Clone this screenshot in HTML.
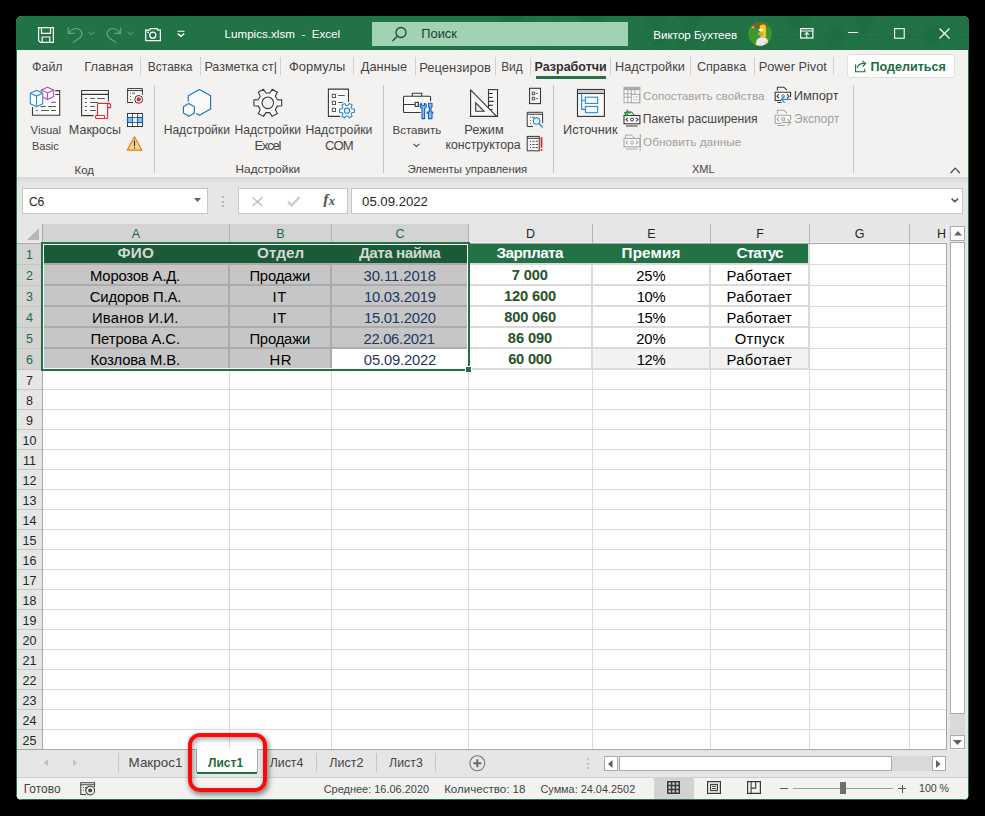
<!DOCTYPE html><html><head><meta charset="utf-8"><style>
html,body{margin:0;padding:0;}
body{width:985px;height:816px;background:#000;position:relative;overflow:hidden;font-family:"Liberation Sans", sans-serif;}
.a{position:absolute;}
.t{white-space:nowrap;}
#win{position:absolute;left:0;top:0;width:985px;height:816px;clip-path:inset(16px 16px 16px 16px round 6px);background:#f3f2f1;}
svg{overflow:visible}
</style></head><body><div id="win">
<div class="a" style="left:16px;top:16px;width:953px;height:34px;background:#217346;"></div>
<svg class="a" style="left:0;top:0" width="985" height="60" viewBox="0 0 985 60"><defs><linearGradient id="tpg" x1="0" x2="1"><stop offset="0" stop-color="#fff" stop-opacity="0"/><stop offset="0.12" stop-color="#fff" stop-opacity="1"/></linearGradient><mask id="tpm"><rect x="440" y="16" width="529" height="34" fill="url(#tpg)"/></mask><clipPath id="tpc"><rect x="16" y="16" width="953" height="34"/></clipPath></defs><g mask="url(#tpm)" clip-path="url(#tpc)" opacity="0.55"><path d="M-6.2 16L13.3 50M-6.2 16L-25.7 50" stroke="#1c6a3e" stroke-width="1"/><path d="M18.2 16L37.7 50M18.2 16L-1.3 50" stroke="#1c6a3e" stroke-width="1"/><path d="M42.6 16L62.1 50M42.6 16L23.1 50" stroke="#1c6a3e" stroke-width="1"/><path d="M67.0 16L86.5 50M67.0 16L47.5 50" stroke="#1c6a3e" stroke-width="1"/><path d="M91.4 16L110.9 50M91.4 16L71.9 50" stroke="#1c6a3e" stroke-width="1"/><path d="M115.8 16L135.3 50M115.8 16L96.3 50" stroke="#1c6a3e" stroke-width="1"/><path d="M140.2 16L159.7 50M140.2 16L120.7 50" stroke="#1c6a3e" stroke-width="1"/><path d="M164.6 16L184.1 50M164.6 16L145.1 50" stroke="#1c6a3e" stroke-width="1"/><path d="M189.0 16L208.5 50M189.0 16L169.5 50" stroke="#1c6a3e" stroke-width="1"/><path d="M213.4 16L232.9 50M213.4 16L193.9 50" stroke="#1c6a3e" stroke-width="1"/><path d="M237.8 16L257.3 50M237.8 16L218.3 50" stroke="#1c6a3e" stroke-width="1"/><path d="M262.2 16L281.7 50M262.2 16L242.7 50" stroke="#1c6a3e" stroke-width="1"/><path d="M286.6 16L306.1 50M286.6 16L267.1 50" stroke="#1c6a3e" stroke-width="1"/><path d="M311.0 16L330.5 50M311.0 16L291.5 50" stroke="#1c6a3e" stroke-width="1"/><path d="M335.4 16L354.9 50M335.4 16L315.9 50" stroke="#1c6a3e" stroke-width="1"/><path d="M359.8 16L379.3 50M359.8 16L340.3 50" stroke="#1c6a3e" stroke-width="1"/><path d="M384.2 16L403.7 50M384.2 16L364.7 50" stroke="#1c6a3e" stroke-width="1"/><path d="M408.6 16L428.1 50M408.6 16L389.1 50" stroke="#1c6a3e" stroke-width="1"/><path d="M433.0 16L452.5 50M433.0 16L413.5 50" stroke="#1c6a3e" stroke-width="1"/><path d="M457.4 16L476.9 50M457.4 16L437.9 50" stroke="#1c6a3e" stroke-width="1"/><path d="M481.8 16L501.3 50M481.8 16L462.3 50" stroke="#1c6a3e" stroke-width="1"/><path d="M506.2 16L525.7 50M506.2 16L486.7 50" stroke="#1c6a3e" stroke-width="1"/><path d="M530.6 16L550.1 50M530.6 16L511.1 50" stroke="#1c6a3e" stroke-width="1"/><path d="M555.0 16L574.5 50M555.0 16L535.5 50" stroke="#1c6a3e" stroke-width="1"/><path d="M579.4 16L598.9 50M579.4 16L559.9 50" stroke="#1c6a3e" stroke-width="1"/><path d="M603.8 16L623.3 50M603.8 16L584.3 50" stroke="#1c6a3e" stroke-width="1"/><path d="M628.2 16L647.7 50M628.2 16L608.7 50" stroke="#1c6a3e" stroke-width="1"/><path d="M652.6 16L672.1 50M652.6 16L633.1 50" stroke="#1c6a3e" stroke-width="1"/><path d="M677.0 16L696.5 50M677.0 16L657.5 50" stroke="#1c6a3e" stroke-width="1"/><path d="M701.4 16L720.9 50M701.4 16L681.9 50" stroke="#1c6a3e" stroke-width="1"/><path d="M725.8 16L745.3 50M725.8 16L706.3 50" stroke="#1c6a3e" stroke-width="1"/><path d="M750.2 16L769.7 50M750.2 16L730.7 50" stroke="#1c6a3e" stroke-width="1"/><path d="M774.6 16L794.1 50M774.6 16L755.1 50" stroke="#1c6a3e" stroke-width="1"/><path d="M799.0 16L818.5 50M799.0 16L779.5 50" stroke="#1c6a3e" stroke-width="1"/><path d="M823.4 16L842.9 50M823.4 16L803.9 50" stroke="#1c6a3e" stroke-width="1"/><path d="M847.8 16L867.3 50M847.8 16L828.3 50" stroke="#1c6a3e" stroke-width="1"/><path d="M872.2 16L891.7 50M872.2 16L852.7 50" stroke="#1c6a3e" stroke-width="1"/><path d="M896.6 16L916.1 50M896.6 16L877.1 50" stroke="#1c6a3e" stroke-width="1"/><path d="M921.0 16L940.5 50M921.0 16L901.5 50" stroke="#1c6a3e" stroke-width="1"/><path d="M945.4 16L964.9 50M945.4 16L925.9 50" stroke="#1c6a3e" stroke-width="1"/><path d="M969.8 16L989.3 50M969.8 16L950.3 50" stroke="#1c6a3e" stroke-width="1"/><path d="M994.2 16L1013.7 50M994.2 16L974.7 50" stroke="#1c6a3e" stroke-width="1"/><path d="M440 37.3H969" stroke="#1c6a3e" stroke-width="1"/><path d="M677.6 16H702.0L689.8 37.3Z" fill="#1c6a3e"/><path d="M852.0 16H876.4L864.2 37.3Z" fill="#1c6a3e"/><path d="M500.0 16H524.4L512.2 37.3Z" fill="#1c6a3e"/><path d="M580.0 16H604.4L592.2 37.3Z" fill="#1c6a3e"/><path d="M647.0 50L659.2 37.3H671.4Z" fill="#1c6a3e"/><path d="M920.0 50L932.2 37.3H944.4Z" fill="#1c6a3e"/><path d="M540.0 50L552.2 37.3H564.4Z" fill="#1c6a3e"/><circle cx="835" cy="36.7" r="8.5" fill="#1c6a3e"/><circle cx="835" cy="36.7" r="11.0" fill="none" stroke="#1c6a3e" stroke-width="1.2"/><circle cx="798.4" cy="16" r="11" fill="#1c6a3e"/><circle cx="798.4" cy="16" r="13.5" fill="none" stroke="#1c6a3e" stroke-width="1.2"/><circle cx="689" cy="40" r="9" fill="#1c6a3e"/><circle cx="689" cy="40" r="11.5" fill="none" stroke="#1c6a3e" stroke-width="1.2"/><circle cx="655" cy="16" r="10" fill="#1c6a3e"/><circle cx="655" cy="16" r="12.5" fill="none" stroke="#1c6a3e" stroke-width="1.2"/><circle cx="935" cy="34" r="9" fill="#1c6a3e"/><circle cx="935" cy="34" r="11.5" fill="none" stroke="#1c6a3e" stroke-width="1.2"/></g></svg>
<div class="a" style="left:372px;top:22px;width:256px;height:24px;background:#9fd3b4;"></div>
<svg class="a" style="left:390px;top:26px;" width="18" height="16" viewBox="0 0 18 16"><circle cx="11" cy="6.5" r="5" fill="none" stroke="#1f4f33" stroke-width="1.3"/><line x1="7.3" y1="10.2" x2="2.5" y2="15" stroke="#1f4f33" stroke-width="1.4"/></svg>
<div class="a t" style="left:421.23px;top:28.00px;font-size:12.889px;color:#1f3f2c;font-weight:400;line-height:1;">Поиск</div>
<div class="a t" style="left:224.53px;top:28.00px;font-size:11.643px;color:#ffffff;font-weight:400;line-height:1;">Lumpics.xlsm&nbsp;&nbsp;-&nbsp;&nbsp;Excel</div>
<div class="a t" style="left:653.23px;top:29.00px;font-size:11.634px;color:#ffffff;font-weight:400;line-height:1;">Виктор Бухтеев</div>
<div class="a t" style="left:32.08px;top:61.00px;font-size:12.426px;color:#454545;font-weight:400;line-height:1;">Файл</div>
<div class="a t" style="left:84.33px;top:61.00px;font-size:12.871px;color:#454545;font-weight:400;line-height:1;">Главная</div>
<div class="a t" style="left:147.80px;top:61.00px;font-size:12.000px;color:#454545;font-weight:400;line-height:1;">Вставка</div>
<div class="a t" style="left:204.46px;top:61.00px;font-size:12.496px;color:#454545;font-weight:400;line-height:1;">Разметка ст|</div>
<div class="a t" style="left:289.05px;top:61.00px;font-size:12.923px;color:#454545;font-weight:400;line-height:1;">Формулы</div>
<div class="a t" style="left:360.80px;top:61.00px;font-size:12.811px;color:#454545;font-weight:400;line-height:1;">Данные</div>
<div class="a t" style="left:419.22px;top:61.00px;font-size:13.000px;color:#454545;font-weight:400;line-height:1;">Рецензиров</div>
<div class="a t" style="left:501.21px;top:62.00px;font-size:11.884px;color:#454545;font-weight:400;line-height:1;">Вид</div>
<div class="a t" style="left:534.56px;top:61.00px;font-size:12.513px;color:#303030;font-weight:700;line-height:1;">Разработчи</div>
<div class="a t" style="left:615.04px;top:61.00px;font-size:12.748px;color:#454545;font-weight:400;line-height:1;">Надстройки</div>
<div class="a t" style="left:696.97px;top:61.00px;font-size:12.568px;color:#454545;font-weight:400;line-height:1;">Справка</div>
<div class="a t" style="left:758.74px;top:61.00px;font-size:12.762px;color:#454545;font-weight:400;line-height:1;">Power Pivot</div>
<div class="a" style="left:140px;top:57px;width:1px;height:18px;background:#d2d0ce;"></div>
<div class="a" style="left:200px;top:57px;width:1px;height:18px;background:#d2d0ce;"></div>
<div class="a" style="left:280px;top:57px;width:1px;height:18px;background:#d2d0ce;"></div>
<div class="a" style="left:353px;top:57px;width:1px;height:18px;background:#d2d0ce;"></div>
<div class="a" style="left:415px;top:57px;width:1px;height:18px;background:#d2d0ce;"></div>
<div class="a" style="left:495px;top:57px;width:1px;height:18px;background:#d2d0ce;"></div>
<div class="a" style="left:530px;top:57px;width:1px;height:18px;background:#d2d0ce;"></div>
<div class="a" style="left:610px;top:57px;width:1px;height:18px;background:#d2d0ce;"></div>
<div class="a" style="left:690px;top:57px;width:1px;height:18px;background:#d2d0ce;"></div>
<div class="a" style="left:754px;top:57px;width:1px;height:18px;background:#d2d0ce;"></div>
<div class="a" style="left:833px;top:57px;width:1px;height:18px;background:#d2d0ce;"></div>
<div class="a" style="left:536px;top:76px;width:70px;height:3px;background:#217346;"></div>
<div class="a" style="left:847px;top:54px;width:108px;height:24px;background:#ffffff;border:1px solid #e1dfdd;box-sizing:border-box;border-radius:3px;"></div>
<div class="a t" style="left:870.56px;top:61.00px;font-size:12.545px;color:#1e6b3f;font-weight:700;line-height:1;">Поделиться</div>
<div class="a" style="left:154px;top:85px;width:1px;height:88px;background:#c8c6c4;"></div>
<div class="a" style="left:383px;top:85px;width:1px;height:88px;background:#c8c6c4;"></div>
<div class="a" style="left:553px;top:85px;width:1px;height:88px;background:#c8c6c4;"></div>
<div class="a" style="left:853px;top:85px;width:1px;height:88px;background:#c8c6c4;"></div>
<div class="a t" style="left:30.60px;top:125.00px;font-size:11.283px;color:#454545;font-weight:400;line-height:1;">Visual</div>
<div class="a t" style="left:31.98px;top:141.00px;font-size:10.979px;color:#454545;font-weight:400;line-height:1;">Basic</div>
<div class="a t" style="left:68.86px;top:124.00px;font-size:12.522px;color:#454545;font-weight:400;line-height:1;">Макросы</div>
<div class="a t" style="left:74.54px;top:165.00px;font-size:11.446px;color:#454545;font-weight:400;line-height:1;">Код</div>
<div class="a t" style="left:163.69px;top:124.00px;font-size:12.075px;color:#454545;font-weight:400;line-height:1;">Надстройки</div>
<div class="a t" style="left:234.39px;top:124.00px;font-size:12.150px;color:#454545;font-weight:400;line-height:1;">Надстройки</div>
<div class="a t" style="left:254.62px;top:139.00px;font-size:13.081px;color:#454545;font-weight:400;line-height:1;letter-spacing:-1.322px;">Excel</div>
<div class="a t" style="left:305.48px;top:124.00px;font-size:12.206px;color:#454545;font-weight:400;line-height:1;">Надстройки</div>
<div class="a t" style="left:325.05px;top:139.00px;font-size:13.081px;color:#454545;font-weight:400;line-height:1;letter-spacing:-0.990px;">COM</div>
<div class="a t" style="left:235.62px;top:163.00px;font-size:11.757px;color:#454545;font-weight:400;line-height:1;">Надстройки</div>
<div class="a t" style="left:392.54px;top:125.00px;font-size:11.515px;color:#454545;font-weight:400;line-height:1;">Вставить</div>
<div class="a t" style="left:464.34px;top:124.00px;font-size:12.780px;color:#454545;font-weight:400;line-height:1;">Режим</div>
<div class="a t" style="left:445.38px;top:139.00px;font-size:12.314px;color:#454545;font-weight:400;line-height:1;">конструктора</div>
<div class="a t" style="left:407.43px;top:164.00px;font-size:11.386px;color:#454545;font-weight:400;line-height:1;">Элементы управления</div>
<div class="a t" style="left:563.04px;top:124.00px;font-size:12.762px;color:#454545;font-weight:400;line-height:1;">Источник</div>
<div class="a t" style="left:643.02px;top:90.00px;font-size:11.691px;color:#a19f9d;font-weight:400;line-height:1;">Сопоставить свойства</div>
<div class="a t" style="left:642.69px;top:113.00px;font-size:12.183px;color:#454545;font-weight:400;line-height:1;">Пакеты расширения</div>
<div class="a t" style="left:643.01px;top:137.00px;font-size:11.818px;color:#a19f9d;font-weight:400;line-height:1;">Обновить данные</div>
<div class="a t" style="left:793.63px;top:90.00px;font-size:12.882px;color:#454545;font-weight:400;line-height:1;">Импорт</div>
<div class="a t" style="left:794.00px;top:113.00px;font-size:12.054px;color:#a19f9d;font-weight:400;line-height:1;">Экспорт</div>
<div class="a t" style="left:691.93px;top:164.00px;font-size:11.000px;color:#454545;font-weight:400;line-height:1;">XML</div>
<div class="a" style="left:16px;top:177px;width:953px;height:47px;background:#e6e6e6;"></div>
<div class="a" style="left:16px;top:177px;width:953px;height:7px;background:linear-gradient(#d9d8d7,#e6e6e6);"></div>
<div class="a" style="left:22px;top:188px;width:186px;height:26px;background:#ffffff;border:1px solid #c6c6c6;box-sizing:border-box;"></div>
<div class="a t" style="left:28.90px;top:196.00px;font-size:12.083px;color:#262626;font-weight:400;line-height:1;">C6</div>
<div class="a" style="left:238px;top:188px;width:110px;height:26px;background:#ffffff;border:1px solid #c6c6c6;box-sizing:border-box;"></div>
<div class="a" style="left:351px;top:188px;width:612px;height:26px;background:#ffffff;border:1px solid #c6c6c6;box-sizing:border-box;"></div>
<div class="a t" style="left:362.07px;top:195.00px;font-size:13.178px;color:#262626;font-weight:400;line-height:1;">05.09.2022</div>
<div class="a" style="left:17px;top:224px;width:929px;height:19px;background:#e6e6e6;"></div>
<div class="a" style="left:43px;top:224px;width:425px;height:19px;background:#d3d3d3;"></div>
<div class="a" style="left:17px;top:242px;width:929px;height:1px;background:#efefef;"></div>
<div class="a" style="left:43px;top:242px;width:425px;height:1px;background:#e4e0e0;"></div>
<div class="a" style="left:17px;top:244px;width:25px;height:505px;background:#e6e6e6;"></div>
<div class="a" style="left:17px;top:244px;width:25px;height:125px;background:#d3d3d3;"></div>
<div class="a" style="left:43px;top:244px;width:903px;height:505px;background:#ffffff;"></div>
<div class="a" style="left:17px;top:264px;width:25px;height:1px;background:#c4c4c4;"></div>
<div class="a" style="left:17px;top:285px;width:25px;height:1px;background:#c4c4c4;"></div>
<div class="a" style="left:17px;top:306px;width:25px;height:1px;background:#c4c4c4;"></div>
<div class="a" style="left:17px;top:327px;width:25px;height:1px;background:#c4c4c4;"></div>
<div class="a" style="left:17px;top:348px;width:25px;height:1px;background:#c4c4c4;"></div>
<div class="a" style="left:17px;top:369px;width:25px;height:1px;background:#c4c4c4;"></div>
<div class="a" style="left:17px;top:389px;width:25px;height:1px;background:#c8c8c8;"></div>
<div class="a" style="left:17px;top:409px;width:25px;height:1px;background:#c8c8c8;"></div>
<div class="a" style="left:17px;top:429px;width:25px;height:1px;background:#c8c8c8;"></div>
<div class="a" style="left:17px;top:449px;width:25px;height:1px;background:#c8c8c8;"></div>
<div class="a" style="left:17px;top:469px;width:25px;height:1px;background:#c8c8c8;"></div>
<div class="a" style="left:17px;top:489px;width:25px;height:1px;background:#c8c8c8;"></div>
<div class="a" style="left:17px;top:509px;width:25px;height:1px;background:#c8c8c8;"></div>
<div class="a" style="left:17px;top:529px;width:25px;height:1px;background:#c8c8c8;"></div>
<div class="a" style="left:17px;top:549px;width:25px;height:1px;background:#c8c8c8;"></div>
<div class="a" style="left:17px;top:569px;width:25px;height:1px;background:#c8c8c8;"></div>
<div class="a" style="left:17px;top:589px;width:25px;height:1px;background:#c8c8c8;"></div>
<div class="a" style="left:17px;top:609px;width:25px;height:1px;background:#c8c8c8;"></div>
<div class="a" style="left:17px;top:629px;width:25px;height:1px;background:#c8c8c8;"></div>
<div class="a" style="left:17px;top:649px;width:25px;height:1px;background:#c8c8c8;"></div>
<div class="a" style="left:17px;top:669px;width:25px;height:1px;background:#c8c8c8;"></div>
<div class="a" style="left:17px;top:689px;width:25px;height:1px;background:#c8c8c8;"></div>
<div class="a" style="left:17px;top:709px;width:25px;height:1px;background:#c8c8c8;"></div>
<div class="a" style="left:17px;top:729px;width:25px;height:1px;background:#c8c8c8;"></div>
<div class="a" style="left:229px;top:224px;width:1px;height:19px;background:#b4b4b4;"></div>
<div class="a" style="left:331px;top:224px;width:1px;height:19px;background:#b4b4b4;"></div>
<div class="a" style="left:468px;top:224px;width:1px;height:19px;background:#b4b4b4;"></div>
<div class="a" style="left:592px;top:224px;width:1px;height:19px;background:#b4b4b4;"></div>
<div class="a" style="left:710px;top:224px;width:1px;height:19px;background:#b4b4b4;"></div>
<div class="a" style="left:809px;top:224px;width:1px;height:19px;background:#b4b4b4;"></div>
<div class="a" style="left:909px;top:224px;width:1px;height:19px;background:#b4b4b4;"></div>
<div class="a" style="left:17px;top:243px;width:929px;height:1px;background:#a8a8a8;"></div>
<div class="a" style="left:42px;top:224px;width:1px;height:525px;background:#a8a8a8;"></div>
<div class="a" style="left:946px;top:243px;width:1px;height:507px;background:#a8a8a8;"></div>
<div class="a" style="left:17px;top:749px;width:930px;height:1px;background:#a8a8a8;"></div>
<div class="a" style="left:43px;top:389px;width:903px;height:1px;background:#dadada;"></div>
<div class="a" style="left:43px;top:409px;width:903px;height:1px;background:#dadada;"></div>
<div class="a" style="left:43px;top:429px;width:903px;height:1px;background:#dadada;"></div>
<div class="a" style="left:43px;top:449px;width:903px;height:1px;background:#dadada;"></div>
<div class="a" style="left:43px;top:469px;width:903px;height:1px;background:#dadada;"></div>
<div class="a" style="left:43px;top:489px;width:903px;height:1px;background:#dadada;"></div>
<div class="a" style="left:43px;top:509px;width:903px;height:1px;background:#dadada;"></div>
<div class="a" style="left:43px;top:529px;width:903px;height:1px;background:#dadada;"></div>
<div class="a" style="left:43px;top:549px;width:903px;height:1px;background:#dadada;"></div>
<div class="a" style="left:43px;top:569px;width:903px;height:1px;background:#dadada;"></div>
<div class="a" style="left:43px;top:589px;width:903px;height:1px;background:#dadada;"></div>
<div class="a" style="left:43px;top:609px;width:903px;height:1px;background:#dadada;"></div>
<div class="a" style="left:43px;top:629px;width:903px;height:1px;background:#dadada;"></div>
<div class="a" style="left:43px;top:649px;width:903px;height:1px;background:#dadada;"></div>
<div class="a" style="left:43px;top:669px;width:903px;height:1px;background:#dadada;"></div>
<div class="a" style="left:43px;top:689px;width:903px;height:1px;background:#dadada;"></div>
<div class="a" style="left:43px;top:709px;width:903px;height:1px;background:#dadada;"></div>
<div class="a" style="left:43px;top:729px;width:903px;height:1px;background:#dadada;"></div>
<div class="a" style="left:229px;top:370px;width:1px;height:379px;background:#dadada;"></div>
<div class="a" style="left:331px;top:370px;width:1px;height:379px;background:#dadada;"></div>
<div class="a" style="left:468px;top:370px;width:1px;height:379px;background:#dadada;"></div>
<div class="a" style="left:592px;top:370px;width:1px;height:379px;background:#dadada;"></div>
<div class="a" style="left:710px;top:370px;width:1px;height:379px;background:#dadada;"></div>
<div class="a" style="left:809px;top:370px;width:1px;height:379px;background:#dadada;"></div>
<div class="a" style="left:909px;top:370px;width:1px;height:379px;background:#dadada;"></div>
<div class="a" style="left:810px;top:264px;width:136px;height:1px;background:#dadada;"></div>
<div class="a" style="left:810px;top:285px;width:136px;height:1px;background:#dadada;"></div>
<div class="a" style="left:810px;top:306px;width:136px;height:1px;background:#dadada;"></div>
<div class="a" style="left:810px;top:327px;width:136px;height:1px;background:#dadada;"></div>
<div class="a" style="left:810px;top:348px;width:136px;height:1px;background:#dadada;"></div>
<div class="a" style="left:810px;top:369px;width:136px;height:1px;background:#dadada;"></div>
<div class="a" style="left:909px;top:244px;width:1px;height:126px;background:#dadada;"></div>
<div class="a" style="left:470px;top:263px;width:340px;height:2px;background:#dadada;"></div>
<div class="a" style="left:470px;top:284px;width:340px;height:2px;background:#dadada;"></div>
<div class="a" style="left:470px;top:305px;width:340px;height:2px;background:#dadada;"></div>
<div class="a" style="left:470px;top:326px;width:340px;height:2px;background:#dadada;"></div>
<div class="a" style="left:470px;top:347px;width:340px;height:2px;background:#dadada;"></div>
<div class="a" style="left:470px;top:368px;width:340px;height:2px;background:#dadada;"></div>
<div class="a" style="left:591px;top:244px;width:2px;height:125px;background:#dadada;"></div>
<div class="a" style="left:709px;top:244px;width:2px;height:125px;background:#dadada;"></div>
<div class="a" style="left:808px;top:244px;width:2px;height:125px;background:#dadada;"></div>
<div class="a" style="left:470px;top:244px;width:338px;height:19px;background:#217346;"></div>
<svg class="a" style="left:27px;top:228px;" width="12" height="12" viewBox="0 0 12 12"><polygon points="12,0 12,12 0,12" fill="#b8b8b8"/></svg>
<div class="a t" style="left:-64.00px;width:400px;text-align:center;top:228.00px;font-size:12.500px;color:#1e6b3f;font-weight:400;line-height:1;">A</div>
<div class="a t" style="left:80.50px;width:400px;text-align:center;top:228.00px;font-size:12.500px;color:#1e6b3f;font-weight:400;line-height:1;">B</div>
<div class="a t" style="left:200.00px;width:400px;text-align:center;top:228.00px;font-size:12.500px;color:#1e6b3f;font-weight:400;line-height:1;">C</div>
<div class="a t" style="left:330.50px;width:400px;text-align:center;top:228.00px;font-size:12.500px;color:#262626;font-weight:400;line-height:1;">D</div>
<div class="a t" style="left:451.50px;width:400px;text-align:center;top:228.00px;font-size:12.500px;color:#262626;font-weight:400;line-height:1;">E</div>
<div class="a t" style="left:560.00px;width:400px;text-align:center;top:228.00px;font-size:12.500px;color:#262626;font-weight:400;line-height:1;">F</div>
<div class="a t" style="left:659.50px;width:400px;text-align:center;top:228.00px;font-size:12.500px;color:#262626;font-weight:400;line-height:1;">G</div>
<div class="a t" style="left:741.50px;width:400px;text-align:center;top:228.00px;font-size:12.500px;color:#262626;font-weight:400;line-height:1;">H</div>
<div class="a t" style="left:-170.50px;width:400px;text-align:center;top:249.00px;font-size:12.500px;color:#1e6b3f;font-weight:400;line-height:1;">1</div>
<div class="a t" style="left:-170.50px;width:400px;text-align:center;top:270.00px;font-size:12.500px;color:#1e6b3f;font-weight:400;line-height:1;">2</div>
<div class="a t" style="left:-170.50px;width:400px;text-align:center;top:291.00px;font-size:12.500px;color:#1e6b3f;font-weight:400;line-height:1;">3</div>
<div class="a t" style="left:-170.50px;width:400px;text-align:center;top:312.00px;font-size:12.500px;color:#1e6b3f;font-weight:400;line-height:1;">4</div>
<div class="a t" style="left:-170.50px;width:400px;text-align:center;top:333.00px;font-size:12.500px;color:#1e6b3f;font-weight:400;line-height:1;">5</div>
<div class="a t" style="left:-170.50px;width:400px;text-align:center;top:354.00px;font-size:12.500px;color:#1e6b3f;font-weight:400;line-height:1;">6</div>
<div class="a t" style="left:-170.50px;width:400px;text-align:center;top:375.00px;font-size:12.500px;color:#262626;font-weight:400;line-height:1;">7</div>
<div class="a t" style="left:-170.50px;width:400px;text-align:center;top:395.00px;font-size:12.500px;color:#262626;font-weight:400;line-height:1;">8</div>
<div class="a t" style="left:-170.50px;width:400px;text-align:center;top:415.00px;font-size:12.500px;color:#262626;font-weight:400;line-height:1;">9</div>
<div class="a t" style="left:-170.50px;width:400px;text-align:center;top:435.00px;font-size:12.500px;color:#262626;font-weight:400;line-height:1;">10</div>
<div class="a t" style="left:-170.50px;width:400px;text-align:center;top:455.00px;font-size:12.500px;color:#262626;font-weight:400;line-height:1;">11</div>
<div class="a t" style="left:-170.50px;width:400px;text-align:center;top:475.00px;font-size:12.500px;color:#262626;font-weight:400;line-height:1;">12</div>
<div class="a t" style="left:-170.50px;width:400px;text-align:center;top:495.00px;font-size:12.500px;color:#262626;font-weight:400;line-height:1;">13</div>
<div class="a t" style="left:-170.50px;width:400px;text-align:center;top:515.00px;font-size:12.500px;color:#262626;font-weight:400;line-height:1;">14</div>
<div class="a t" style="left:-170.50px;width:400px;text-align:center;top:535.00px;font-size:12.500px;color:#262626;font-weight:400;line-height:1;">15</div>
<div class="a t" style="left:-170.50px;width:400px;text-align:center;top:555.00px;font-size:12.500px;color:#262626;font-weight:400;line-height:1;">16</div>
<div class="a t" style="left:-170.50px;width:400px;text-align:center;top:575.00px;font-size:12.500px;color:#262626;font-weight:400;line-height:1;">17</div>
<div class="a t" style="left:-170.50px;width:400px;text-align:center;top:595.00px;font-size:12.500px;color:#262626;font-weight:400;line-height:1;">18</div>
<div class="a t" style="left:-170.50px;width:400px;text-align:center;top:615.00px;font-size:12.500px;color:#262626;font-weight:400;line-height:1;">19</div>
<div class="a t" style="left:-170.50px;width:400px;text-align:center;top:635.00px;font-size:12.500px;color:#262626;font-weight:400;line-height:1;">20</div>
<div class="a t" style="left:-170.50px;width:400px;text-align:center;top:655.00px;font-size:12.500px;color:#262626;font-weight:400;line-height:1;">21</div>
<div class="a t" style="left:-170.50px;width:400px;text-align:center;top:675.00px;font-size:12.500px;color:#262626;font-weight:400;line-height:1;">22</div>
<div class="a t" style="left:-170.50px;width:400px;text-align:center;top:695.00px;font-size:12.500px;color:#262626;font-weight:400;line-height:1;">23</div>
<div class="a t" style="left:-170.50px;width:400px;text-align:center;top:715.00px;font-size:12.500px;color:#262626;font-weight:400;line-height:1;">24</div>
<div class="a t" style="left:-170.50px;width:400px;text-align:center;top:735.00px;font-size:12.500px;color:#262626;font-weight:400;line-height:1;">25</div>
<div class="a" style="left:44px;top:245px;width:423px;height:123px;background:#c6c6c6;"></div>
<div class="a" style="left:44px;top:245px;width:423px;height:18px;background:#1b5a37;"></div>
<div class="a" style="left:44px;top:263px;width:423px;height:2px;background:#ababab;"></div>
<div class="a" style="left:44px;top:284px;width:423px;height:2px;background:#ababab;"></div>
<div class="a" style="left:44px;top:305px;width:423px;height:2px;background:#ababab;"></div>
<div class="a" style="left:44px;top:326px;width:423px;height:2px;background:#ababab;"></div>
<div class="a" style="left:44px;top:347px;width:423px;height:2px;background:#ababab;"></div>
<div class="a" style="left:228px;top:265px;width:2px;height:103px;background:#ababab;"></div>
<div class="a" style="left:330px;top:265px;width:2px;height:103px;background:#ababab;"></div>
<div class="a" style="left:332px;top:349px;width:135px;height:19px;background:#ffffff;"></div>
<div class="a" style="left:43px;top:244px;width:425px;height:1px;background:#fff;"></div>
<div class="a" style="left:43px;top:368px;width:425px;height:1px;background:#fff;"></div>
<div class="a" style="left:43px;top:244px;width:1px;height:125px;background:#fff;"></div>
<div class="a" style="left:467px;top:244px;width:1px;height:125px;background:#fff;"></div>
<div class="a" style="left:41px;top:242px;width:429px;height:2px;background:#217346;"></div>
<div class="a" style="left:41px;top:369px;width:424px;height:2px;background:#217346;"></div>
<div class="a" style="left:41px;top:242px;width:2px;height:129px;background:#217346;"></div>
<div class="a" style="left:468px;top:242px;width:2px;height:124px;background:#217346;"></div>
<div class="a" style="left:465px;top:366px;width:7px;height:7px;background:#ffffff;"></div>
<div class="a" style="left:466px;top:367px;width:5px;height:5px;background:#217346;"></div>
<div class="a" style="left:593px;top:349px;width:116px;height:19px;background:#f2f2f2;"></div>
<div class="a" style="left:711px;top:349px;width:97px;height:19px;background:#f2f2f2;"></div>
<div class="a t" style="left:117.42px;top:245.00px;font-size:15.262px;color:#d2d8d4;font-weight:700;line-height:1;letter-spacing:0.249px;">ФИО</div>
<div class="a t" style="left:257.04px;top:245.00px;font-size:15.262px;color:#d2d8d4;font-weight:700;line-height:1;letter-spacing:0.024px;">Отдел</div>
<div class="a t" style="left:359.00px;top:245.00px;font-size:15.262px;color:#d2d8d4;font-weight:700;line-height:1;letter-spacing:-0.503px;">Дата найма</div>
<div class="a t" style="left:496.62px;top:245.00px;font-size:15.262px;color:#ffffff;font-weight:700;line-height:1;letter-spacing:-0.541px;">Зарплата</div>
<div class="a t" style="left:621.56px;top:245.00px;font-size:15.262px;color:#ffffff;font-weight:700;line-height:1;letter-spacing:0.143px;">Премия</div>
<div class="a t" style="left:736.54px;top:245.00px;font-size:15.262px;color:#ffffff;font-weight:700;line-height:1;letter-spacing:-0.873px;">Статус</div>
<div class="a t" style="left:89.99px;top:269.00px;font-size:14.826px;color:#000000;font-weight:400;line-height:1;letter-spacing:-0.172px;">Морозов А.Д.</div>
<div class="a t" style="left:249.39px;top:269.00px;font-size:14.826px;color:#000000;font-weight:400;line-height:1;letter-spacing:-0.174px;">Продажи</div>
<div class="a t" style="left:363.46px;top:269.00px;font-size:14.826px;color:#1f3864;font-weight:400;line-height:1;letter-spacing:-0.056px;">30.11.2018</div>
<div class="a t" style="left:511.67px;top:268.00px;font-size:14.680px;color:#24532c;font-weight:700;line-height:1;letter-spacing:-0.125px;">7 000</div>
<div class="a t" style="left:636.26px;top:269.00px;font-size:14.826px;color:#000000;font-weight:400;line-height:1;letter-spacing:-0.120px;">25%</div>
<div class="a t" style="left:726.59px;top:269.00px;font-size:14.826px;color:#000000;font-weight:400;line-height:1;letter-spacing:0.262px;">Работает</div>
<div class="a t" style="left:89.76px;top:290.00px;font-size:14.826px;color:#000000;font-weight:400;line-height:1;letter-spacing:-0.143px;">Сидоров П.А.</div>
<div class="a t" style="left:272.52px;top:290.00px;font-size:14.826px;color:#000000;font-weight:400;line-height:1;letter-spacing:0.510px;">IT</div>
<div class="a t" style="left:363.99px;top:290.00px;font-size:14.826px;color:#1f3864;font-weight:400;line-height:1;letter-spacing:-0.238px;">10.03.2019</div>
<div class="a t" style="left:503.97px;top:289.00px;font-size:14.680px;color:#24532c;font-weight:700;line-height:1;letter-spacing:-0.141px;">120 600</div>
<div class="a t" style="left:636.69px;top:290.00px;font-size:14.826px;color:#000000;font-weight:400;line-height:1;letter-spacing:-0.334px;">10%</div>
<div class="a t" style="left:726.59px;top:290.00px;font-size:14.826px;color:#000000;font-weight:400;line-height:1;letter-spacing:0.262px;">Работает</div>
<div class="a t" style="left:91.99px;top:311.00px;font-size:14.826px;color:#000000;font-weight:400;line-height:1;letter-spacing:0.192px;">Иванов И.И.</div>
<div class="a t" style="left:272.52px;top:311.00px;font-size:14.826px;color:#000000;font-weight:400;line-height:1;letter-spacing:0.510px;">IT</div>
<div class="a t" style="left:363.99px;top:311.00px;font-size:14.826px;color:#1f3864;font-weight:400;line-height:1;letter-spacing:-0.238px;">15.01.2020</div>
<div class="a t" style="left:504.33px;top:310.00px;font-size:14.680px;color:#24532c;font-weight:700;line-height:1;letter-spacing:-0.202px;">800 060</div>
<div class="a t" style="left:636.69px;top:311.00px;font-size:14.826px;color:#000000;font-weight:400;line-height:1;letter-spacing:-0.334px;">15%</div>
<div class="a t" style="left:726.59px;top:311.00px;font-size:14.826px;color:#000000;font-weight:400;line-height:1;letter-spacing:0.262px;">Работает</div>
<div class="a t" style="left:90.49px;top:332.00px;font-size:14.826px;color:#000000;font-weight:400;line-height:1;letter-spacing:-0.083px;">Петрова А.С.</div>
<div class="a t" style="left:249.39px;top:332.00px;font-size:14.826px;color:#000000;font-weight:400;line-height:1;letter-spacing:-0.174px;">Продажи</div>
<div class="a t" style="left:363.46px;top:332.00px;font-size:14.826px;color:#1f3864;font-weight:400;line-height:1;letter-spacing:-0.291px;">22.06.2021</div>
<div class="a t" style="left:507.83px;top:331.00px;font-size:14.680px;color:#24532c;font-weight:700;line-height:1;letter-spacing:-0.088px;">86 090</div>
<div class="a t" style="left:636.26px;top:332.00px;font-size:14.826px;color:#000000;font-weight:400;line-height:1;letter-spacing:-0.120px;">20%</div>
<div class="a t" style="left:734.66px;top:332.00px;font-size:14.826px;color:#000000;font-weight:400;line-height:1;letter-spacing:0.400px;">Отпуск</div>
<div class="a t" style="left:90.49px;top:353.00px;font-size:14.826px;color:#000000;font-weight:400;line-height:1;letter-spacing:-0.117px;">Козлова М.В.</div>
<div class="a t" style="left:269.49px;top:353.00px;font-size:14.826px;color:#000000;font-weight:400;line-height:1;letter-spacing:0.456px;">HR</div>
<div class="a t" style="left:363.83px;top:353.00px;font-size:14.826px;color:#1f3864;font-weight:400;line-height:1;letter-spacing:-0.180px;">05.09.2022</div>
<div class="a t" style="left:508.13px;top:352.00px;font-size:14.680px;color:#24532c;font-weight:700;line-height:1;letter-spacing:-0.208px;">60 000</div>
<div class="a t" style="left:636.69px;top:353.00px;font-size:14.826px;color:#000000;font-weight:400;line-height:1;letter-spacing:-0.334px;">12%</div>
<div class="a t" style="left:726.59px;top:353.00px;font-size:14.826px;color:#000000;font-weight:400;line-height:1;letter-spacing:0.262px;">Работает</div>
<div class="a" style="left:947px;top:224px;width:21px;height:525px;background:#e6e6e6;"></div>
<div class="a" style="left:950px;top:226px;width:15px;height:15px;background:#ffffff;border:1px solid #ababab;box-sizing:border-box;"></div>
<div class="a" style="left:950px;top:714px;width:15px;height:21px;background:#d9d9d9;"></div>
<div class="a" style="left:950px;top:242px;width:15px;height:472px;background:#ffffff;border:1px solid #ababab;box-sizing:border-box;"></div>
<div class="a" style="left:950px;top:735px;width:15px;height:14px;background:#ffffff;border:1px solid #ababab;box-sizing:border-box;"></div>
<div class="a" style="left:17px;top:750px;width:951px;height:27px;background:#e6e6e6;"></div>
<div class="a" style="left:17px;top:777px;width:951px;height:1px;background:#cdcdcd;"></div>
<div class="a" style="left:118px;top:753px;width:1px;height:19px;background:#c6c6c6;"></div>
<div class="a" style="left:196px;top:749px;width:62px;height:25px;background:#ffffff;"></div>
<div class="a" style="left:196px;top:749px;width:1px;height:24px;background:#a8a8a8;"></div>
<div class="a" style="left:257px;top:749px;width:1px;height:24px;background:#a8a8a8;"></div>
<div class="a" style="left:197px;top:772px;width:60px;height:2px;background:#217346;"></div>
<div class="a t" style="left:128.59px;top:756.00px;font-size:13.436px;color:#444444;font-weight:400;line-height:1;">Макрос1</div>
<div class="a t" style="left:208.00px;top:757.00px;font-size:12.034px;color:#1e6b3f;font-weight:700;line-height:1;">Лист1</div>
<div class="a t" style="left:269.70px;top:757.00px;font-size:12.333px;color:#444444;font-weight:400;line-height:1;">Лист4</div>
<div class="a" style="left:316px;top:753px;width:1px;height:19px;background:#c6c6c6;"></div>
<div class="a t" style="left:329.30px;top:757.00px;font-size:12.523px;color:#444444;font-weight:400;line-height:1;">Лист2</div>
<div class="a" style="left:376px;top:753px;width:1px;height:19px;background:#c6c6c6;"></div>
<div class="a t" style="left:389.00px;top:757.00px;font-size:12.407px;color:#444444;font-weight:400;line-height:1;">Лист3</div>
<div class="a" style="left:435px;top:753px;width:1px;height:19px;background:#c6c6c6;"></div>
<div class="a" style="left:604px;top:756px;width:343px;height:15px;background:#e6e6e6;"></div>
<div class="a" style="left:604px;top:756px;width:14px;height:15px;background:#ffffff;border:1px solid #ababab;box-sizing:border-box;"></div>
<div class="a" style="left:892px;top:756px;width:40px;height:15px;background:#d9d9d9;"></div>
<div class="a" style="left:619px;top:756px;width:273px;height:15px;background:#ffffff;border:1px solid #ababab;box-sizing:border-box;"></div>
<div class="a" style="left:932px;top:756px;width:14px;height:15px;background:#ffffff;border:1px solid #ababab;box-sizing:border-box;"></div>
<div class="a" style="left:17px;top:778px;width:951px;height:22px;background:#f3f2f1;"></div>
<div class="a t" style="left:23.71px;top:784.00px;font-size:11.933px;color:#444444;font-weight:400;line-height:1;">Готово</div>
<div class="a t" style="left:323.65px;top:784.00px;font-size:10.982px;color:#444444;font-weight:400;line-height:1;">Среднее: 16.06.2020</div>
<div class="a t" style="left:444.13px;top:784.00px;font-size:11.552px;color:#444444;font-weight:400;line-height:1;">Количество: 18</div>
<div class="a t" style="left:540.45px;top:784.00px;font-size:10.907px;color:#444444;font-weight:400;line-height:1;">Сумма: 24.04.2502</div>
<div class="a" style="left:654px;top:777px;width:40px;height:22px;background:#d2d2d2;"></div>
<div class="a t" style="left:919.00px;top:783.00px;font-size:10.606px;color:#444444;font-weight:400;line-height:1;">100 %</div>
<div class="a" style="left:793px;top:788px;width:100px;height:1px;background:#a0a0a0;"></div>
<div class="a" style="left:840px;top:782px;width:6px;height:12px;background:#6e6e6e;"></div>
<div class="a" style="left:16px;top:16px;width:1px;height:784px;background:#217346;"></div>
<div class="a" style="left:968px;top:16px;width:1px;height:784px;background:#217346;"></div>
<div class="a" style="left:16px;top:799px;width:953px;height:1px;background:#217346;"></div>
<div class="a" style="left:187.5px;top:733px;width:79px;height:59px;border:4.7px solid #fb0a0a;border-radius:12px;box-sizing:border-box;box-shadow:1.5px 2.5px 5px rgba(0,0,0,0.45), inset 1.5px 2.5px 5px rgba(0,0,0,0.35);"></div>
<svg class="a" style="left:38px;top:27px;" width="16" height="16" viewBox="0 0 16 16"><path d="M0.6 0.6H15.4V15.4H2.4L0.6 13.6Z" fill="none" stroke="#fff" stroke-width="1.2"/><path d="M3.5 0.6V6.4H12.5V0.6" fill="none" stroke="#fff" stroke-width="1.2"/><path d="M4.2 15.4V10H11.8V15.4" fill="none" stroke="#fff" stroke-width="1.2"/></svg>
<svg class="a" style="left:67px;top:27px;" width="18" height="16" viewBox="0 0 18 16"><path d="M1.2 0.3V6.4H7.7" fill="none" stroke="#6fa583" stroke-width="1.1"/><path d="M1.5 6.2C4.5 1.5 10 0 13.3 3.2C15.6 5.6 15.2 8.6 13 10.8L5.8 15.6" fill="none" stroke="#6fa583" stroke-width="1.1"/></svg>
<svg class="a" style="left:88px;top:31px;" width="8" height="5" viewBox="0 0 8 5"><path d="M0.5 0.8L3.5 3.8L6.5 0.8" fill="none" stroke="#6fa583" stroke-width="1"/></svg>
<svg class="a" style="left:106px;top:27px;" width="18" height="16" viewBox="0 0 18 16"><path d="M14.8 0.3V6.4H8.3" fill="none" stroke="#6fa583" stroke-width="1.1"/><path d="M14.5 6.2C11.5 1.5 6 0 2.7 3.2C0.4 5.6 0.8 8.6 3 10.8L10.2 15.6" fill="none" stroke="#6fa583" stroke-width="1.1"/></svg>
<svg class="a" style="left:127px;top:31px;" width="8" height="5" viewBox="0 0 8 5"><path d="M0.5 0.8L3.5 3.8L6.5 0.8" fill="none" stroke="#6fa583" stroke-width="1"/></svg>
<svg class="a" style="left:145px;top:28px;" width="17" height="14" viewBox="0 0 17 14"><path d="M0.7 2.2H4.5L5.2 0.7H12L12.8 2.2H15.4V12.6H0.7Z" fill="none" stroke="#fff" stroke-width="1.2"/><circle cx="7.8" cy="7.2" r="3" fill="none" stroke="#fff" stroke-width="1.3"/><rect x="2.4" y="3.6" width="1.6" height="1.6" fill="#fff"/></svg>
<svg class="a" style="left:177px;top:30px;" width="9" height="8" viewBox="0 0 9 8"><path d="M0.5 1.2H7.5" stroke="#fff" stroke-width="1.1"/><path d="M0.8 3.6L4 6.4L7.2 3.6" fill="none" stroke="#fff" stroke-width="1.4"/></svg>
<svg class="a" style="left:748px;top:22px;" width="24" height="24" viewBox="0 0 24 24"><defs><clipPath id="av"><circle cx="12" cy="12" r="11.8"/></clipPath></defs><g clip-path="url(#av)"><rect width="24" height="24" fill="#3f982c"/><path d="M2 6.5Q6 0.5 13 0.8Q19 1 21 6L17 5.5L11 6.5Z" fill="#8a5a2c"/><path d="M3 6Q4 4 6 4L6.5 6.5Z" fill="#d0b090"/><path d="M11.7 4Q12.5 2.4 15 2.5Q17.9 2.8 17.9 5V15.2H12.5V9Z" fill="#f4cf1e"/><ellipse cx="12.9" cy="8" rx="2.3" ry="1.4" fill="#f4f4f4"/><path d="M10 10.5Q12 9.8 15.2 10.5V14Q12.5 14.5 10.3 13Z" fill="#c9a24e"/><path d="M7.6 24L8.6 18Q10.5 15.4 14 15.2Q19.5 15.4 20 19L20.5 24Z" fill="#e9e9ee"/><path d="M16.5 20.5L20 19.5L20.5 22.5L17 23Z" fill="#f4cf1e"/><path d="M7.5 21.5L9 21.5L8.5 23.5L7 23.5Z" fill="#f4cf1e"/></g></svg>
<svg class="a" style="left:800px;top:28px;" width="14" height="11" viewBox="0 0 14 11"><rect x="0.6" y="0.6" width="12.3" height="9.4" fill="none" stroke="#fff" stroke-width="1.2"/><path d="M0.6 3H12.9" stroke="#fff" stroke-width="1.1"/><path d="M6.75 10V4.6M4.6 6.6L6.75 4.5L8.9 6.6" fill="none" stroke="#fff" stroke-width="1.1"/></svg>
<div class="a" style="left:848px;top:32px;width:10px;height:1px;background:#fff;"></div>
<svg class="a" style="left:894px;top:28px;" width="11" height="11" viewBox="0 0 11 11"><rect x="0.6" y="0.6" width="9.6" height="9.6" fill="none" stroke="#fff" stroke-width="1.1"/></svg>
<svg class="a" style="left:939px;top:28px;" width="11" height="11" viewBox="0 0 11 11"><path d="M0.5 0.5L10.5 10.5M10.5 0.5L0.5 10.5" stroke="#fff" stroke-width="1.1"/></svg>
<svg class="a" style="left:855px;top:60px;" width="14" height="13" viewBox="0 0 14 13"><path d="M0.6 4.4V11.8H9.8V8.8" fill="none" stroke="#1e6b3f" stroke-width="1.1"/><path d="M2.2 8C3 5 5.5 3.3 9.5 3.4" fill="none" stroke="#1e6b3f" stroke-width="1.1"/><path d="M7.5 0.8L10.6 3.5L7.8 6.5" fill="none" stroke="#1e6b3f" stroke-width="1.1"/></svg>
<svg class="a" style="left:26px;top:84px;" width="40" height="36" viewBox="0 0 40 36"><path d="M6.5 23V31.3H33.7V6.6H29.3" fill="#fafafa" stroke="#383838" stroke-width="1.1"/><path d="M29.3 10.5H33.2" stroke="#383838" stroke-width="1.1"/><path d="M25.2 18.3H29.9M14.6 22.5H19.8M22.2 22.5H29.9M10 26.5H11.8M15 26.5H22.9M25 26.5H29.9" stroke="#555" stroke-width="1"/><polygon points="21.5,3.2 27.7,6.1 27.7,12.5 21.5,15.4 15.3,12.5 15.3,6.1" fill="#fafafa" stroke="#b04cc0" stroke-width="1.1" stroke-linejoin="round"/><path d="M15.3 6.1L21.5 9.0L27.7 6.1M21.5 9.0V15.4" fill="none" stroke="#b04cc0" stroke-width="1.1"/><polygon points="10.5,6.3 16.7,9.2 16.7,19.8 10.5,22.7 4.3,19.8 4.3,9.2" fill="#fafafa" stroke="#2b8fd9" stroke-width="1.1" stroke-linejoin="round"/><path d="M4.3 9.2L10.5 12.1L16.7 9.2M10.5 12.1V22.7" fill="none" stroke="#2b8fd9" stroke-width="1.1"/></svg>
<svg class="a" style="left:76px;top:84px;" width="40" height="36" viewBox="0 0 40 36"><path d="M17.6 31.6H5.6V6.5H32.4V17.4" fill="#fafafa" stroke="#383838" stroke-width="1.1"/><path d="M5.6 10.4H32.4" stroke="#383838" stroke-width="1.1"/><path d="M9.1 14.5H11M14.1 14.5H18.9M21.1 14.5H28.9M9.1 18.5H11M14.1 18.5H22M9.1 22.5H11M14.1 22.5H18.9M9.1 26.5H11M14.1 26.5H19.8" stroke="#555" stroke-width="1"/><path d="M21.5 31.5V20.5Q21.5 19.4 22.6 19.4H32.5Q34.6 19.4 34.6 21.6V23.6H31.6V33.4Q31.6 34.5 30.5 34.5H28.6" fill="#fafafa" stroke="#e8262d" stroke-width="1.1"/><path d="M31.6 19.6V23.6" stroke="#e8262d" stroke-width="1.1"/><rect x="19.6" y="31.5" width="9" height="3" rx="0.8" fill="#fafafa" stroke="#e8262d" stroke-width="1.1"/></svg>
<svg class="a" style="left:122px;top:84px;" width="26" height="22" viewBox="0 0 26 22"><path d="M11 18.5H5.6V4.6H20.4V11" fill="#fafafa" stroke="#383838" stroke-width="1"/><path d="M5.6 6.6H20.4" stroke="#383838" stroke-width="1"/><path d="M8 9.2H9M10.2 9.2H13M8 12.4H9M8 15.5H9" stroke="#555" stroke-width="1"/><circle cx="16.7" cy="15.4" r="3.9" fill="#fafafa" stroke="#383838" stroke-width="1"/><circle cx="16.7" cy="15.4" r="2.1" fill="#e8262d"/></svg>
<svg class="a" style="left:122px;top:113px;" width="26" height="15" viewBox="0 0 26 15"><rect x="5.5" y="0.5" width="15" height="13" fill="#fafafa" stroke="#383838" stroke-width="1"/><path d="M10.5 0.5V13.5M15.5 0.5V13.5M5.5 4.5H20.5M5.5 9.5H20.5" stroke="#6a6a6a" stroke-width="1"/><rect x="5.5" y="0.5" width="15" height="13" fill="none" stroke="#383838" stroke-width="1"/><rect x="5.5" y="4.5" width="5" height="5" fill="#8cc4ef" stroke="#0f64c0" stroke-width="1.2"/><rect x="15.5" y="4.5" width="5" height="5" fill="#8cc4ef" stroke="#0f64c0" stroke-width="1.2"/></svg>
<svg class="a" style="left:122px;top:136px;" width="26" height="16" viewBox="0 0 26 16"><path d="M12.5 0.8L19.8 14.2H5.2Z" fill="#f7d48a" stroke="#e0801a" stroke-width="1.2" stroke-linejoin="round"/><path d="M12.5 4.5V10" stroke="#333" stroke-width="1.2"/><rect x="11.9" y="11.2" width="1.2" height="1.3" fill="#333"/></svg>
<svg class="a" style="left:176px;top:84px;" width="40" height="36" viewBox="0 0 40 36"><path d="M12.3 17.6V11.7L23.4 5.5L34.6 11.7V25.1L23.4 31.3L20.3 29.4" fill="#fafafa" stroke="#1f73c8" stroke-width="1.15" stroke-linejoin="round"/><polygon points="12.8,19.4 18.4,22.7 18.4,29.1 12.8,32.2 7.4,29.1 7.4,22.7" fill="#fafafa" stroke="#1f73c8" stroke-width="1.15" stroke-linejoin="round"/></svg>
<svg class="a" style="left:248px;top:84px;" width="40" height="36" viewBox="0 0 40 36"><polygon points="29.26,15.59 33.69,15.90 33.69,21.80 29.26,22.11 27.35,25.41 29.30,29.40 24.19,32.36 21.71,28.67 17.89,28.67 15.41,32.36 10.30,29.40 12.25,25.41 10.34,22.11 5.91,21.80 5.91,15.90 10.34,15.59 12.25,12.29 10.30,8.30 15.41,5.34 17.89,9.03 21.71,9.03 24.19,5.34 29.30,8.30 27.35,12.29" fill="#fafafa" stroke="#383838" stroke-width="1.1" stroke-linejoin="round"/><circle cx="19.8" cy="18.85" r="5.8" fill="#f3f2f1" stroke="#383838" stroke-width="1.1"/></svg>
<svg class="a" style="left:322px;top:84px;" width="40" height="36" viewBox="0 0 40 36"><path d="M18.1 32.4H6.4V5.1H26.5V18.1" fill="#fafafa" stroke="#383838" stroke-width="1.1"/><rect x="10.3" y="10.3" width="3.2" height="3.2" fill="none" stroke="#555" stroke-width="1"/><rect x="10.3" y="17.3" width="3.2" height="3.2" fill="none" stroke="#555" stroke-width="1"/><rect x="10.3" y="24.3" width="3.2" height="3.2" fill="none" stroke="#555" stroke-width="1"/><path d="M16.2 11.5H22.8M16.2 18.5H21" stroke="#555" stroke-width="1"/><polygon points="29.95,24.80 32.43,25.12 32.43,28.28 29.95,28.60 29.12,30.04 30.09,32.35 27.35,33.93 25.83,31.93 24.17,31.93 22.65,33.93 19.91,32.35 20.88,30.04 20.05,28.60 17.57,28.28 17.57,25.12 20.05,24.80 20.88,23.36 19.91,21.05 22.65,19.47 24.17,21.47 25.83,21.47 27.35,19.47 30.09,21.05 29.12,23.36" fill="#fafafa" stroke="#2b8ad6" stroke-width="1.1" stroke-linejoin="round"/><circle cx="25" cy="26.7" r="2.6" fill="#f0f0f0" stroke="#2b8ad6" stroke-width="1.1"/></svg>
<svg class="a" style="left:398px;top:88px;" width="40" height="36" viewBox="0 0 40 36"><path d="M22.7 24.5H6.5Q5.5 24.5 5.5 23.5V9.2Q5.5 8.2 6.5 8.2H31.6Q32.6 8.2 32.6 9.2V13.2" fill="#fafafa" stroke="#383838" stroke-width="1.1"/><path d="M14.3 8.2V5.3H23.8V8.2" fill="none" stroke="#383838" stroke-width="1.1"/><path d="M5.5 16.5H17.2" stroke="#383838" stroke-width="1.1"/><rect x="17.2" y="14.4" width="3.2" height="4" fill="#fafafa" stroke="#383838" stroke-width="1.1"/><path d="M24 30.6V20.6Q22 19.6 22 17.6Q22 15.8 23.6 15.2V17.8H26.3V15.2Q28.4 15.8 28.4 17.6Q28.4 19.6 26.6 20.6V30.6Z" fill="#8cc0f0" stroke="#0f64c0" stroke-width="1.1" stroke-linejoin="round"/><path d="M30.5 15.2H34V19H33V24H34.8V25.2H34V30.6H30.5V25.2H29.2V24H31.4V19H30.5Z" fill="#8cc0f0" stroke="#0f64c0" stroke-width="1.1" stroke-linejoin="round"/></svg>
<svg class="a" style="left:464px;top:84px;" width="40" height="36" viewBox="0 0 40 36"><rect x="24.5" y="5.6" width="9" height="26.8" fill="#fafafa" stroke="#383838" stroke-width="1.1"/><path d="M24.5 9.5H28.7M24.5 13.5H28.7M24.5 17.4H29.8M24.5 21.4H28.7M24.5 25.5H28.7" stroke="#383838" stroke-width="1.1"/><path d="M6.6 5.8V32.4H32.6Z" fill="#fafafa" stroke="#383838" stroke-width="1.15" stroke-linejoin="round"/><path d="M11.7 18.8V27.3H20.1Z" fill="#f0f0f0" stroke="#383838" stroke-width="1.1"/></svg>
<svg class="a" style="left:522px;top:84px;" width="26" height="22" viewBox="0 0 26 22"><rect x="7.6" y="4.3" width="10.9" height="15.3" fill="#fafafa" stroke="#383838" stroke-width="1.1"/><rect x="10.3" y="8.2" width="2.4" height="2.5" fill="none" stroke="#555" stroke-width="1"/><rect x="10.3" y="13.3" width="2.4" height="2.5" fill="none" stroke="#555" stroke-width="1"/><path d="M14.2 9.5H15.9M14.2 14.6H15.9" stroke="#555" stroke-width="1"/></svg>
<svg class="a" style="left:522px;top:84px;" width="26" height="46" viewBox="0 0 26 46"><path d="M11 42.5H5.2V28.3H20.6V39" fill="#fafafa" stroke="#383838" stroke-width="1"/><path d="M5.2 30.2H20.6" stroke="#383838" stroke-width="1"/><path d="M8 33.3H9M10.2 33.3H12.5M8 36.5H9M8 39.6H9" stroke="#555" stroke-width="1"/><circle cx="14.6" cy="37" r="3.2" fill="#fafafa" stroke="#2b8ad6" stroke-width="1.2"/><path d="M16.8 39.3L20.6 43.5" stroke="#2b8ad6" stroke-width="1.3"/></svg>
<svg class="a" style="left:522px;top:84px;" width="26" height="70" viewBox="0 0 26 70"><rect x="5.2" y="52.4" width="12" height="14.4" fill="#fafafa" stroke="#383838" stroke-width="1"/><path d="M5.2 54.3H17.2" stroke="#383838" stroke-width="1"/><path d="M8 57.3H9M10.2 57.3H12.6M13.6 57.3H16M8 60.5H9M10.2 60.5H12.6M13.6 60.5H16M8 63.6H9M10.2 63.6H12.6M13.6 63.6H16" stroke="#555" stroke-width="1"/><rect x="18.6" y="53.2" width="1.8" height="10.5" fill="#e8262d"/><rect x="18.6" y="65" width="1.8" height="1.8" fill="#e8262d"/></svg>
<svg class="a" style="left:570px;top:84px;" width="40" height="36" viewBox="0 0 40 36"><rect x="7.5" y="5.5" width="26.9" height="26.9" fill="#fafafa" stroke="#383838" stroke-width="1.15"/><rect x="8" y="6" width="26" height="3.5" fill="#c8c8c8"/><path d="M7.5 9.5H34.4" stroke="#383838" stroke-width="1.1"/><path d="M11.6 9.5V25.4H15.4M11.6 16.3H15.4" fill="none" stroke="#2b8ad6" stroke-width="1.1"/><rect x="15.4" y="13.2" width="12.2" height="6.2" fill="#fafafa" stroke="#2b8ad6" stroke-width="1.1"/><rect x="15.4" y="22.5" width="12.2" height="6.2" fill="#fafafa" stroke="#2b8ad6" stroke-width="1.1"/></svg>
<svg class="a" style="left:618px;top:84px;" width="32" height="22" viewBox="0 0 32 22"><rect x="6" y="3.3" width="15.9" height="15.4" fill="#fafafa" stroke="#a8a8a8" stroke-width="1"/><rect x="6" y="3.3" width="15.9" height="2.9" fill="#a8a8a8"/><path d="M6 9.8H13.3M6 13.2H13.3M9.8 6V18.7M13.3 6V10.3M17 6V10.3" stroke="#a8a8a8" stroke-width="1"/><rect x="13.3" y="10.3" width="8.1" height="8.4" fill="#fafafa" stroke="#a8a8a8" stroke-width="1"/><path d="M15.3 12.8H16.3M17.5 12.8H19.5M15.3 15.8H16.3M17.5 15.8H19.5" stroke="#a8a8a8" stroke-width="1"/></svg>
<svg class="a" style="left:618px;top:110px;" width="32" height="22" viewBox="0 0 32 22"><path d="M7.6 5.5V2H13.6L16.2 5" fill="none" stroke="#383838" stroke-width="1"/><rect x="6" y="5.5" width="15.9" height="8.3" fill="#fafafa" stroke="#383838" stroke-width="1.1"/><path d="M10 7.8L8 9.6L10 11.4M18 7.8L20 9.6L18 11.4" fill="none" stroke="#383838" stroke-width="1.1"/><circle cx="14" cy="9.6" r="1.5" fill="none" stroke="#383838" stroke-width="1"/><path d="M8.1 16H19.7" stroke="#383838" stroke-width="1.1"/><path d="M9.4 -0.6V6.2M6 2.8H12.8" stroke="#22a04a" stroke-width="1.4"/></svg>
<svg class="a" style="left:618px;top:133px;" width="32" height="22" viewBox="0 0 32 22"><path d="M7.6 5.5V2H13.6L16.2 5" fill="none" stroke="#a8a8a8" stroke-width="1"/><rect x="6" y="5.5" width="15.9" height="8.3" fill="#fafafa" stroke="#a8a8a8" stroke-width="1.1"/><path d="M10 7.8L8 9.6L10 11.4M18 7.8L20 9.6L18 11.4" fill="none" stroke="#a8a8a8" stroke-width="1.1"/><circle cx="14" cy="9.6" r="1.5" fill="none" stroke="#a8a8a8" stroke-width="1"/><path d="M8.1 16H19.7" stroke="#a8a8a8" stroke-width="1.1"/><path d="M22.3 1V15" stroke="#a8a8a8" stroke-width="1.1"/><rect x="21.5" y="16" width="1.4" height="1.4" fill="#a8a8a8"/></svg>
<svg class="a" style="left:770px;top:84px;" width="30" height="22" viewBox="0 0 30 22"><path d="M7.4 6.5V3.2H13.8L17 6.2" fill="none" stroke="#383838" stroke-width="1.1"/><path d="M11 16.5H5.2V8.2H20.6V13" fill="#fafafa" stroke="#383838" stroke-width="1.1"/><path d="M9 10L7 12.2L9 14.4M17 10L19 12.2L17 14.4" fill="none" stroke="#383838" stroke-width="1.1"/><circle cx="13" cy="12" r="1.3" fill="none" stroke="#888" stroke-width="1"/><path d="M7.4 18.5H11.5" stroke="#383838" stroke-width="1.1"/><path d="M20.9 15.4H11.5M14.6 12.2L11.4 15.4L14.6 18.6" fill="none" stroke="#2b8ad6" stroke-width="1.3"/></svg>
<svg class="a" style="left:770px;top:84px;" width="30" height="46" viewBox="0 0 30 46"><path d="M7.4 29.5V26.2H13.8L17 29.2" fill="none" stroke="#a8a8a8" stroke-width="1.1"/><path d="M11 39.5H5.2V31.2H20.6V36" fill="#fafafa" stroke="#a8a8a8" stroke-width="1.1"/><path d="M9 33L7 35.2L9 37.4" fill="none" stroke="#a8a8a8" stroke-width="1.1"/><rect x="12" y="33.8" width="2.6" height="2.4" fill="none" stroke="#a8a8a8" stroke-width="1"/><path d="M7.4 41.5H15" stroke="#a8a8a8" stroke-width="1.1"/><path d="M11.5 38.4H20.6M17.5 35.2L20.7 38.4L17.5 41.6" fill="none" stroke="#a8a8a8" stroke-width="1.2"/></svg>
<svg class="a" style="left:413px;top:143px;" width="8" height="5" viewBox="0 0 8 5"><path d="M0.5 0.8L3.5 3.6L6.5 0.8" fill="none" stroke="#444" stroke-width="1.1"/></svg>
<svg class="a" style="left:950px;top:167px;" width="11" height="7" viewBox="0 0 11 7"><path d="M0.6 6L5.2 1.2L9.8 6" fill="none" stroke="#444" stroke-width="1.2"/></svg>
<svg class="a" style="left:194px;top:198px;" width="8" height="5" viewBox="0 0 8 5"><path d="M0 0H7L3.5 4Z" fill="#606060"/></svg>
<div class="a" style="left:222px;top:196px;width:2px;height:2px;background:#a6a6a6;border-radius:1px;"></div>
<div class="a" style="left:222px;top:200.5px;width:2px;height:2px;background:#a6a6a6;border-radius:1px;"></div>
<div class="a" style="left:222px;top:205px;width:2px;height:2px;background:#a6a6a6;border-radius:1px;"></div>
<svg class="a" style="left:251.5px;top:196.5px;" width="11" height="9.5" viewBox="0 0 11 9.5"><path d="M0.5 0.5L10.3 9M10.3 0.5L0.5 9" stroke="#b4b4b4" stroke-width="1.2"/></svg>
<svg class="a" style="left:286.5px;top:196px;" width="14" height="11" viewBox="0 0 14 11"><path d="M1 5.6L4.6 9.4L12.6 1" fill="none" stroke="#cdcdcd" stroke-width="2.4"/></svg>
<div class="a t" style="left:323.5px;top:192.2px;font-family:'Liberation Serif',serif;font-style:italic;font-size:14.5px;color:#505050;line-height:1;font-weight:700;-webkit-text-stroke:0.2px #505050">f</div>
<div class="a t" style="left:328.8px;top:194.6px;font-family:'Liberation Serif',serif;font-style:italic;font-size:12.5px;color:#505050;line-height:1;font-weight:700;">x</div>
<svg class="a" style="left:951px;top:198px;" width="8" height="5" viewBox="0 0 8 5"><path d="M0.6 0.6L3.8 3.6L7 0.6" fill="none" stroke="#555" stroke-width="1.5"/></svg>
<svg class="a" style="left:44px;top:759px;" width="4" height="7" viewBox="0 0 4 7"><path d="M4 0V7L0 3.5Z" fill="#c0c0c0"/></svg>
<svg class="a" style="left:73px;top:759px;" width="4" height="7" viewBox="0 0 4 7"><path d="M0 0V7L4 3.5Z" fill="#c0c0c0"/></svg>
<svg class="a" style="left:469px;top:755px;" width="17" height="17" viewBox="0 0 17 17"><circle cx="8.3" cy="8.3" r="7.5" fill="none" stroke="#7a7a7a" stroke-width="1.1"/><path d="M8.3 4.3V12.3M4.3 8.3H12.3" stroke="#6a6a6a" stroke-width="2"/></svg>
<div class="a" style="left:587px;top:758px;width:2px;height:2px;background:#b4b4b4;border-radius:1px;"></div>
<div class="a" style="left:587px;top:762.5px;width:2px;height:2px;background:#b4b4b4;border-radius:1px;"></div>
<div class="a" style="left:587px;top:767px;width:2px;height:2px;background:#b4b4b4;border-radius:1px;"></div>
<svg class="a" style="left:608px;top:760px;" width="5" height="8" viewBox="0 0 5 8"><path d="M4.5 0V8L0 4Z" fill="#606060"/></svg>
<svg class="a" style="left:936px;top:760px;" width="5" height="8" viewBox="0 0 5 8"><path d="M0 0V8L4.5 4Z" fill="#606060"/></svg>
<svg class="a" style="left:954px;top:231px;" width="8" height="4.5" viewBox="0 0 8 4.5"><path d="M0 4.5H8L4 0Z" fill="#606060"/></svg>
<svg class="a" style="left:953px;top:740px;" width="9" height="5" viewBox="0 0 9 5"><path d="M0 0H9L4.5 5Z" fill="#606060"/></svg>
<svg class="a" style="left:80px;top:782px;" width="16" height="14" viewBox="0 0 16 14"><path d="M6 12.5H0.8V0.8H14.5V5" fill="#f3f2f1" stroke="#444" stroke-width="1.1"/><path d="M0.8 2.8H14.5" stroke="#444" stroke-width="1.1"/><path d="M3 5.5H4M5 5.5H7.5M3 8.2H4M5 8.2H6.5" stroke="#555" stroke-width="1"/><circle cx="10.2" cy="8.6" r="4.4" fill="#f3f2f1" stroke="#444" stroke-width="1.1"/><circle cx="10.2" cy="8.6" r="2" fill="#444"/></svg>
<svg class="a" style="left:667px;top:781px;" width="13" height="13" viewBox="0 0 13 13"><rect x="0.75" y="0.75" width="11.5" height="11.5" fill="none" stroke="#3a3a3a" stroke-width="1.5"/><path d="M4.6 0.75V12.25M8.4 0.75V12.25M0.75 4.6H12.25M0.75 8.4H12.25" stroke="#3a3a3a" stroke-width="1.5"/></svg>
<svg class="a" style="left:707px;top:781px;" width="14" height="13" viewBox="0 0 14 13"><rect x="0.6" y="0.6" width="12.8" height="11.8" fill="none" stroke="#3a3a3a" stroke-width="1.2"/><rect x="3.6" y="3.4" width="6.8" height="6.2" fill="none" stroke="#3a3a3a" stroke-width="1.1"/><path d="M5 5.3H9M5 7.6H9" stroke="#3a3a3a" stroke-width="1"/></svg>
<svg class="a" style="left:747px;top:781px;" width="14" height="13" viewBox="0 0 14 13"><path d="M0.6 0.6H13.4V12.4H0.6Z" fill="none" stroke="#3a3a3a" stroke-width="1.2"/><path d="M4.1 0.6V7.1H8.7V0.6M4.1 7.1V12.4" fill="none" stroke="#3a3a3a" stroke-width="1.1"/></svg>
<div class="a" style="left:780px;top:788px;width:8px;height:1px;background:#555;"></div>
<div class="a" style="left:898px;top:788px;width:8px;height:1px;background:#555;"></div>
<div class="a" style="left:901.5px;top:784.5px;width:1px;height:8px;background:#555;"></div>
</div></body></html>
